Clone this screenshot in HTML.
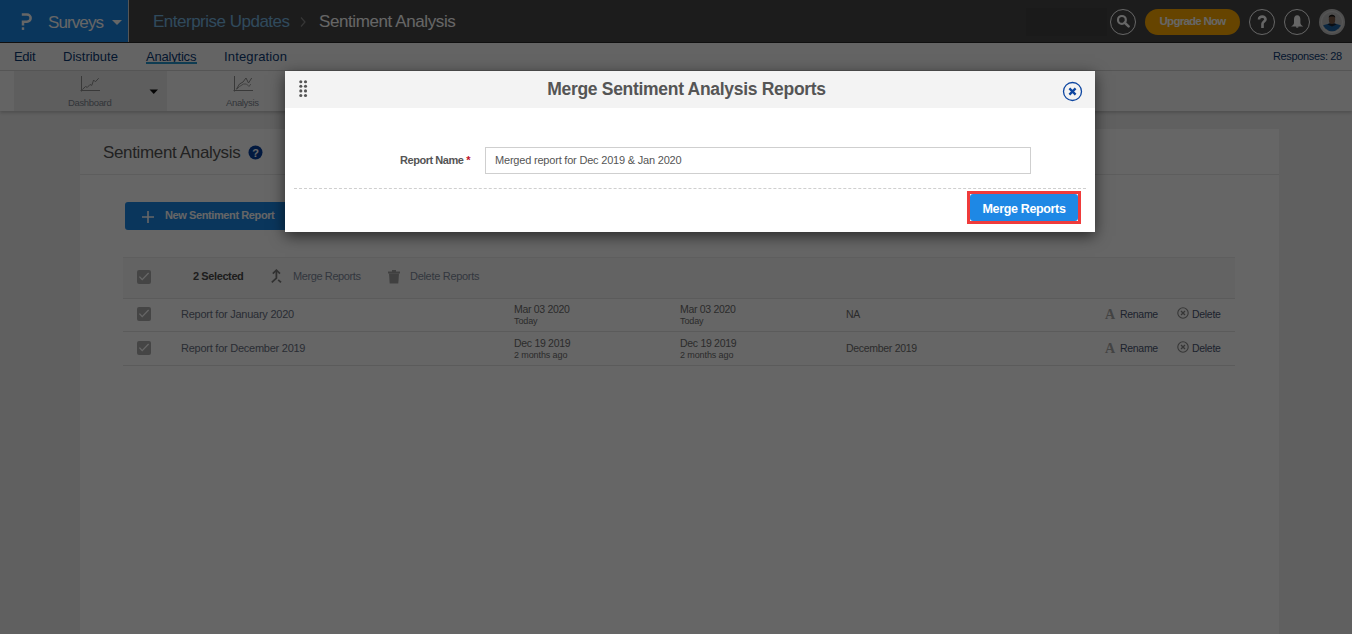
<!DOCTYPE html>
<html><head><meta charset="utf-8">
<style>
*{box-sizing:border-box;margin:0;padding:0}
html,body{width:1352px;height:634px;overflow:hidden;background:#f0f0f0;font-family:"Liberation Sans",sans-serif;position:relative}
.abs{position:absolute;white-space:nowrap}
#top{position:absolute;left:0;top:0;width:1352px;height:43px;background:#474747}
#brand{position:absolute;left:0;top:0;width:128px;height:42px;background:#1b87e6}
#brandline{position:absolute;left:128px;top:0;width:1px;height:42px;background:#d8d8d8}
#topline{position:absolute;left:0;top:42px;width:1352px;height:1px;background:#2a2a2a}
#nav{position:absolute;left:0;top:43px;width:1352px;height:28px;background:#fbfbfb;border-bottom:1px solid #d6d6d6}
#sub{position:absolute;left:0;top:71px;width:1352px;height:40px;background:#fbfbfb;box-shadow:0 2px 3px rgba(0,0,0,.18)}
#container{position:absolute;left:80px;top:129px;width:1199px;height:520px;background:#fff}
.nav a{color:#0b3a74;text-decoration:none}
#overlay{position:absolute;left:0;top:0;width:1352px;height:634px;background:rgba(0,0,0,.6)}
#modal{position:absolute;left:285px;top:71px;width:810px;height:161px;background:#fff;box-shadow:0 4px 14px rgba(0,0,0,.6)}
</style></head>
<body>
<div id="top">
  <div id="brand"></div>
  <div id="brandline"></div>
  <div id="topline"></div>
  <svg class="abs" style="left:20px;top:12px" width="14" height="20" viewBox="0 0 14 20">
    <path d="M1.8 2.45 H7 A3.65 3.65 0 0 1 7 9.75 H3 V13.6" fill="none" stroke="#fff" stroke-width="2.5"/>
    <rect x="1.8" y="15.3" width="2.4" height="2.6" fill="#fff"/>
  </svg>
  <div class="abs" style="left:48px;top:13px;font-size:17px;color:#fff;letter-spacing:-0.9px">Surveys</div>
  <svg class="abs" style="left:111px;top:19px" width="12" height="7"><path d="M1 1 L11 1 L6 6 Z" fill="#fff"/></svg>
  <div class="abs" style="left:153px;top:12px;font-size:17px;color:#78b8e4;letter-spacing:-0.5px">Enterprise Updates</div>
  <svg class="abs" style="left:299px;top:16px" width="8" height="12"><path d="M2 1.5 L6 6 L2 10.5" fill="none" stroke="#888" stroke-width="1.2"/></svg>
  <div class="abs" style="left:319px;top:12px;font-size:17px;color:#fff;letter-spacing:-0.4px">Sentiment Analysis</div>
  <div class="abs" style="left:1026px;top:8px;width:81px;height:28px;background:#424242"></div>
  <!-- search -->
  <div class="abs" style="left:1110px;top:9px;width:26px;height:26px;border:1px solid #fff;border-radius:50%"></div>
  <svg class="abs" style="left:1115px;top:12px" width="16" height="17" viewBox="0 0 16 17"><circle cx="6.9" cy="7.9" r="3.9" fill="none" stroke="#fff" stroke-width="2.2"/><path d="M9.6 10.6 L13.6 14.4" stroke="#fff" stroke-width="2.6" stroke-linecap="round"/></svg>
  <div class="abs" style="left:1145px;top:9px;width:95px;height:26px;border-radius:13px;background:#ffab00"></div>
  <div class="abs" style="left:1145px;top:15px;width:95px;text-align:center;font-size:11.5px;font-weight:700;color:#fff;letter-spacing:-0.75px">Upgrade Now</div>
  <div class="abs" style="left:1249px;top:9px;width:26px;height:26px;border:1px solid #fff;border-radius:50%"></div>
  <svg class="abs" style="left:1255px;top:14px" width="14" height="16" viewBox="0 0 14 16"><path d="M4 5.4 C4 3.4 5.4 2.6 7.3 2.6 C9.3 2.6 10.5 3.8 10.5 5.3 C10.5 7.4 7.5 7.6 7.5 9.8 V13.9" fill="none" stroke="#fff" stroke-width="2.6"/></svg>
  <div class="abs" style="left:1284px;top:9px;width:26px;height:26px;border:1px solid #fff;border-radius:50%"></div>
  <svg class="abs" style="left:1289px;top:13px" width="16" height="17" viewBox="0 0 16 17"><path d="M8.2 2.2 C6 2.2 5 4 5 6.5 V10 C5 11.5 3.5 12.5 2.1 13.4 H14.3 C12.9 12.5 11.4 11.5 11.4 10 V6.5 C11.4 4 10.4 2.2 8.2 2.2 Z" fill="#fff"/><path d="M6.8 13.2 A1.4 1.6 0 0 0 9.6 13.2 Z" fill="#fff"/></svg>
  <svg class="abs" style="left:1318px;top:8px" width="28" height="28" viewBox="0 0 28 28">
    <defs><clipPath id="av"><circle cx="14" cy="14" r="9.3"/></clipPath></defs>
    <circle cx="14" cy="14" r="13" fill="#c4c4c4"/>
    <circle cx="14" cy="14" r="10.6" fill="none" stroke="#d8d8d8" stroke-width="1"/>
    <circle cx="14" cy="14" r="9.3" fill="#bebebe"/>
    <g clip-path="url(#av)">
      <path d="M3 17.6 C6 17.2 9 16.2 11 15.6 L17 15.6 C19 16.2 22 17.2 25 17.6 V26 H3 Z" fill="#1d63a3"/>
      <path d="M9.5 16.4 L12 15.2 H16 L18.5 16.4 L14 18.4 Z" fill="#1a2433"/>
      <ellipse cx="14" cy="11.4" rx="3.2" ry="4.6" fill="#7a5a48"/>
      <path d="M10.7 9.8 C10.4 5.6 17.6 5.6 17.3 9.8 C16.5 8.2 11.5 8.2 10.7 9.8 Z" fill="#161616"/>
    </g>
  </svg>
</div>

<div id="nav" class="nav">
  <div class="abs" style="left:14px;top:6px;font-size:13px;color:#0b3a74;letter-spacing:-0.3px">Edit</div>
  <div class="abs" style="left:63px;top:6px;font-size:13px;color:#0b3a74">Distribute</div>
  <div class="abs" style="left:146px;top:6px;font-size:13px;color:#0b3a74;letter-spacing:-0.2px">Analytics</div>
  <div class="abs" style="left:146px;top:19px;width:51px;height:2px;background:#2496cc"></div>
  <div class="abs" style="left:224px;top:6px;font-size:13px;color:#0b3a74;letter-spacing:0.15px">Integration</div>
  <div class="abs" style="left:1273px;top:7px;font-size:11px;color:#0b3a74;letter-spacing:-0.35px">Responses: 28</div>
</div>

<div id="sub">
  <div class="abs" style="left:14px;top:0;width:153px;height:40px;background:#ebebeb"></div>
  <svg class="abs" style="left:0;top:0" width="300" height="40" viewBox="0 71 300 40">
    <g fill="none" stroke="#8e8e8e" stroke-width="1">
      <path d="M81.5 76 V91.5 M80.5 90.5 H100"/>
      <path d="M82.3 89.6 L85.5 86.5 L87.3 87.4 L90 84.5 L91.8 85.4 L93.6 80 L95.4 81.8 L98.7 78.2"/>
      <path d="M234.5 76 V91.5 M233.5 90.5 H253"/>
      <path d="M236.5 89 L239.5 84 L243 82 L246 78 L248.5 83 L251.7 78"/>
      <path d="M236.5 89.5 L239.5 86.5 L243.5 84 L246.5 84 L249 86.5 L250.8 84" stroke-width="0.8"/>
    </g>
  </svg>
  <div class="abs" style="left:68px;top:26px;font-size:9.5px;color:#7d8590;letter-spacing:-0.35px">Dashboard</div>
  <svg class="abs" style="left:149px;top:18px" width="10" height="6"><path d="M0.5 0.5 H9 L4.75 5 Z" fill="#111"/></svg>
  <div class="abs" style="left:226px;top:26px;font-size:9.5px;color:#7d8590;letter-spacing:-0.35px">Analysis</div>
</div>
</div>

<div id="container">
  <div class="abs" style="left:23px;top:14px;font-size:17px;color:#555;letter-spacing:-0.35px">Sentiment Analysis</div>
  <svg class="abs" style="left:168px;top:16px" width="15" height="15" viewBox="0 0 15 15"><circle cx="7.5" cy="7.5" r="7" fill="#053f9f"/><text x="7.5" y="11.6" text-anchor="middle" font-family="Liberation Sans" font-weight="700" font-size="11" fill="#fff">?</text></svg>
  <div class="abs" style="left:0;top:45px;width:1199px;height:1px;background:#e8e8e8"></div>
  <!-- New button -->
  <div class="abs" style="left:45px;top:73px;width:180px;height:28px;background:#1b87e6;border-radius:3px"></div>
  <svg class="abs" style="left:62px;top:82px" width="12" height="12"><path d="M6 0 V12 M0 6 H12" stroke="#fff" stroke-width="1.6"/></svg>
  <div class="abs" style="left:85px;top:80px;font-size:11px;font-weight:700;color:#fff;letter-spacing:-0.4px">New Sentiment Report</div>
  <!-- table -->
  <div class="abs" style="left:43px;top:128px;width:1112px;height:41px;background:#f8f8f8;border-top:1px solid #ececec"></div>
  <div class="abs" style="left:43px;top:169px;width:1112px;height:1px;background:#e3e3e3"></div>
  <div class="abs" style="left:43px;top:202px;width:1112px;height:1px;background:#e3e3e3"></div>
  <div class="abs" style="left:43px;top:236px;width:1112px;height:1px;background:#e3e3e3"></div>
  <!-- toolbar -->
  <svg class="abs" style="left:57px;top:141px" width="14" height="14" viewBox="0 0 14 14"><rect x="0" y="0" width="14" height="14" rx="2" fill="#adadad"/><path d="M2.4 6.6 L5.2 9.6 L11.6 3" fill="none" stroke="#fff" stroke-width="1.3"/></svg>
  <div class="abs" style="left:113px;top:141px;font-size:11px;font-weight:700;color:#4a4a4a;letter-spacing:-0.4px">2 Selected</div>
  <svg class="abs" style="left:190px;top:140px" width="14" height="15" viewBox="0 0 14 15"><path d="M2.8 4.6 L6.4 1.2 L10 4.6" fill="none" stroke="#7c7c7c" stroke-width="1.8"/><path d="M6.4 1.6 V9.2 L1.8 13.4" fill="none" stroke="#7c7c7c" stroke-width="1.8"/><path d="M8.2 10.8 L11 13.4" fill="none" stroke="#7c7c7c" stroke-width="1.8"/></svg>
  <div class="abs" style="left:213px;top:141px;font-size:11px;color:#7f8a9c;letter-spacing:-0.4px">Merge Reports</div>
  <svg class="abs" style="left:308px;top:141px" width="12" height="14" viewBox="0 0 12 14"><rect x="4" y="0" width="4" height="2" fill="#a0a0a0"/><rect x="0" y="1.5" width="12" height="2" fill="#a0a0a0"/><path d="M1 3.5 H11 L10.3 13.4 H1.7 Z" fill="#a0a0a0"/></svg>
  <div class="abs" style="left:330px;top:141px;font-size:11px;color:#7f8a9c;letter-spacing:-0.3px">Delete Reports</div>
  <!-- row 1 -->
  <svg class="abs" style="left:57px;top:178px" width="14" height="14" viewBox="0 0 14 14"><rect x="0" y="0" width="14" height="14" rx="2" fill="#adadad"/><path d="M2.4 6.6 L5.2 9.6 L11.6 3" fill="none" stroke="#fff" stroke-width="1.3"/></svg>
  <div class="abs" style="left:101px;top:179px;font-size:11px;color:#687082;letter-spacing:-0.25px">Report for January 2020</div>
  <div class="abs" style="left:434px;top:174px;font-size:10.5px;color:#6e6e6e;letter-spacing:-0.3px">Mar 03 2020</div>
  <div class="abs" style="left:434px;top:187px;font-size:9px;color:#6e6e6e;letter-spacing:-0.1px">Today</div>
  <div class="abs" style="left:600px;top:174px;font-size:10.5px;color:#6e6e6e;letter-spacing:-0.3px">Mar 03 2020</div>
  <div class="abs" style="left:600px;top:187px;font-size:9px;color:#6e6e6e;letter-spacing:-0.1px">Today</div>
  <div class="abs" style="left:766px;top:179px;font-size:10.5px;color:#6e6e6e;letter-spacing:-0.3px">NA</div>
  <div class="abs" style="left:1025px;top:178px;font-family:'Liberation Serif';font-weight:700;font-size:14px;color:#a8a8a8">A</div>
  <div class="abs" style="left:1040px;top:179px;font-size:10.5px;color:#4a5672;letter-spacing:-0.3px">Rename</div>
  <svg class="abs" style="left:1097px;top:178px" width="12" height="12" viewBox="0 0 12 12"><circle cx="6" cy="6" r="5.2" fill="none" stroke="#888" stroke-width="1.1"/><path d="M4 4 L8 8 M8 4 L4 8" stroke="#888" stroke-width="1.3"/></svg>
  <div class="abs" style="left:1112px;top:179px;font-size:10.5px;color:#4a5672;letter-spacing:-0.3px">Delete</div>
  <!-- row 2 -->
  <svg class="abs" style="left:57px;top:212px" width="14" height="14" viewBox="0 0 14 14"><rect x="0" y="0" width="14" height="14" rx="2" fill="#adadad"/><path d="M2.4 6.6 L5.2 9.6 L11.6 3" fill="none" stroke="#fff" stroke-width="1.3"/></svg>
  <div class="abs" style="left:101px;top:213px;font-size:11px;color:#687082;letter-spacing:-0.25px">Report for December 2019</div>
  <div class="abs" style="left:434px;top:208px;font-size:10.5px;color:#6e6e6e;letter-spacing:-0.3px">Dec 19 2019</div>
  <div class="abs" style="left:434px;top:221px;font-size:9px;color:#6e6e6e;letter-spacing:-0.1px">2 months ago</div>
  <div class="abs" style="left:600px;top:208px;font-size:10.5px;color:#6e6e6e;letter-spacing:-0.3px">Dec 19 2019</div>
  <div class="abs" style="left:600px;top:221px;font-size:9px;color:#6e6e6e;letter-spacing:-0.1px">2 months ago</div>
  <div class="abs" style="left:766px;top:213px;font-size:10.5px;color:#6e6e6e;letter-spacing:-0.3px">December 2019</div>
  <div class="abs" style="left:1025px;top:212px;font-family:'Liberation Serif';font-weight:700;font-size:14px;color:#a8a8a8">A</div>
  <div class="abs" style="left:1040px;top:213px;font-size:10.5px;color:#4a5672;letter-spacing:-0.3px">Rename</div>
  <svg class="abs" style="left:1097px;top:212px" width="12" height="12" viewBox="0 0 12 12"><circle cx="6" cy="6" r="5.2" fill="none" stroke="#888" stroke-width="1.1"/><path d="M4 4 L8 8 M8 4 L4 8" stroke="#888" stroke-width="1.3"/></svg>
  <div class="abs" style="left:1112px;top:213px;font-size:10.5px;color:#4a5672;letter-spacing:-0.3px">Delete</div>
</div>

<div id="overlay"></div>

<div id="modal">
  <div class="abs" style="left:0;top:0;width:810px;height:37px;background:#f3f3f3"></div>
  <svg class="abs" style="left:14px;top:9px" width="9" height="18" viewBox="0 0 9 18"><g fill="#555"><circle cx="1.8" cy="1.8" r="1.55"/><circle cx="6.5" cy="1.8" r="1.55"/><circle cx="1.8" cy="6.3" r="1.55"/><circle cx="6.5" cy="6.3" r="1.55"/><circle cx="1.8" cy="10.9" r="1.55"/><circle cx="6.5" cy="10.9" r="1.55"/><circle cx="1.8" cy="15.5" r="1.55"/><circle cx="6.5" cy="15.5" r="1.55"/></g></svg>
  <div class="abs" style="left:0;top:8px;width:803px;text-align:center;font-size:17.5px;font-weight:700;color:#555;letter-spacing:-0.3px">Merge Sentiment Analysis Reports</div>
  <svg class="abs" style="left:777px;top:10px" width="21" height="21" viewBox="0 0 21 21"><circle cx="10.5" cy="10.5" r="9" fill="none" stroke="#0c45a0" stroke-width="1.3"/><path d="M7.4 7.4 L13.6 13.6 M13.6 7.4 L7.4 13.6" stroke="#0c45a0" stroke-width="2.3"/></svg>
  <div class="abs" style="left:115px;top:83px;font-size:11px;font-weight:700;color:#555;letter-spacing:-0.45px">Report Name <span style="color:#c0102a">*</span></div>
  <div class="abs" style="left:200px;top:76px;width:546px;height:27px;border:1px solid #cfcfcf;background:#fff"></div>
  <div class="abs" style="left:210px;top:83px;font-size:11px;color:#555;letter-spacing:-0.2px">Merged report for Dec 2019 &amp; Jan 2020</div>
  <div class="abs" style="left:9px;top:117px;width:792px;height:0;border-top:1px dashed #cfcfcf"></div>
  <div class="abs" style="left:682px;top:120px;width:114px;height:33px;border:3px solid #ef3b3b"></div>
  <div class="abs" style="left:685px;top:123px;width:108px;height:27px;background:#1e88e5;border-radius:3px"></div>
  <div class="abs" style="left:685px;top:131px;width:108px;text-align:center;font-size:12.5px;font-weight:700;color:#fff;letter-spacing:-0.35px">Merge Reports</div>
</div>
</body></html>
